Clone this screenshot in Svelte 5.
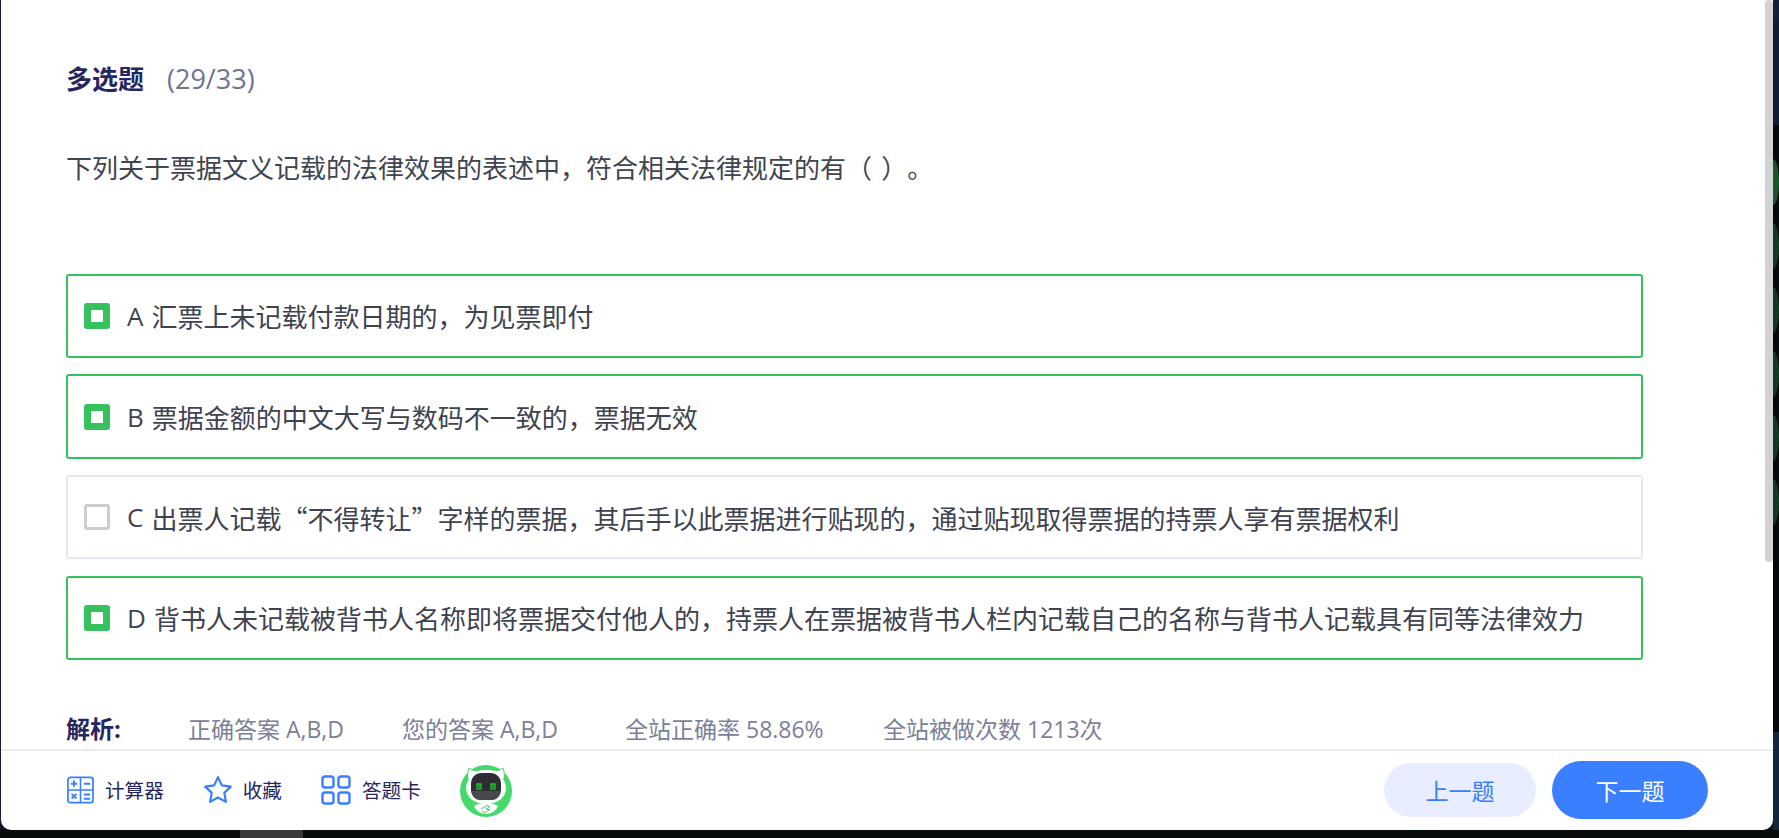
<script>
  const options = [
    { key: 'A', text: '汇票上未记载付款日期的，为见票即付', on: true },
    { key: 'B', text: '票据金额的中文大写与数码不一致的，票据无效', on: true },
    { key: 'C', text: '出票人记载“不得转让”字样的票据，其后手以此票据进行贴现的，通过贴现取得票据的持票人享有票据权利', on: false },
    { key: 'D', text: '背书人未记载被背书人名称即将票据交付他人的，持票人在票据被背书人栏内记载自己的名称与背书人记载具有同等法律效力', on: true }
  ];
</script>

<div class="page" lang="zh-CN">
  <div class="card">
    <div class="content">
      <div class="heading"><b>多选题</b><span>(29/33)</span></div>
      <p class="question">下列关于票据文义记载的法律效果的表述中，符合相关法律规定的有（ ）。</p>
      <ul class="options">
        {#each options as o}
          <li class="option" class:on={o.on}>
            <i class="check"></i>
            <span class="key">{o.key}</span>
            <span class="cjk">{o.text}</span>
          </li>
        {/each}
      </ul>
      <div class="analysis">
        <b>解析:</b>
        <span class="a1">正确答案 A,B,D</span>
        <span class="a2">您的答案 A,B,D</span>
        <span class="a3">全站正确率 58.86%</span>
        <span>全站被做次数 1213次</span>
      </div>
    </div>
    <div class="scrollbar"></div>
    <footer>
      <div class="tool t1">
        <svg width="27" height="28" viewBox="0 0 28 28" fill="none" stroke="#3a7fff">
          <rect x="1" y="1" width="26" height="26" rx="2.5" stroke-width="1.8"/>
          <path d="M14 1v26M1 14h26" stroke-width="1.6"/>
          <path d="M4 7.5h6.5M7.2 4.2v6.5M17.5 7.5h6.5M4.8 18l5 5M9.8 18l-5 5M17.5 18.7h6.5M17.5 23h6.5" stroke-width="2"/>
        </svg>
        <span>计算器</span>
      </div>
      <div class="tool t2">
        <svg width="30" height="30" viewBox="0 0 30 30" fill="none" stroke="#3a7fff" stroke-width="2.2" stroke-linejoin="round">
          <path d="M15 2.2l3.9 8.2 8.9 1.2-6.5 6.3 1.6 9-7.9-4.4-7.9 4.4 1.6-9-6.5-6.3 8.9-1.2z"/>
        </svg>
        <span>收藏</span>
      </div>
      <div class="tool t3">
        <svg width="30" height="30" viewBox="0 0 30 30" fill="none" stroke="#3a7fff" stroke-width="2.4">
          <rect x="1.5" y="1.5" width="11" height="11" rx="2.5"/>
          <rect x="17.5" y="1.5" width="11" height="11" rx="2.5"/>
          <rect x="1.5" y="17.5" width="11" height="11" rx="2.5"/>
          <rect x="17.5" y="17.5" width="11" height="11" rx="2.5"/>
        </svg>
        <span>答题卡</span>
      </div>
      <svg class="robot" width="52" height="54" viewBox="0 0 52 54">
        <circle cx="26" cy="28" r="26" fill="#45d96c"/>
        <path d="M9 5c3 2 5 3 8 2.500 6-1.500 12-1.500 18 0 3 .5 5-.5 8-2.500 2 6 2 11-1 14H10C7 16 7 11 9 5z" fill="#fff" stroke="#45d96c" stroke-width="1"/>
        <path d="M6 25c0-10 9-15 20-15s20 5 20 15-9 16-20 16S6 35 6 25z" fill="#f4fff7"/>
        <rect x="11" y="10" width="30" height="27" rx="10" fill="#2e2e32"/>
        <path d="M11.500 28h29c-1 6-4 9-9 9H20.500c-5 0-8-3-9-9z" fill="#48484d"/>
        <path d="M17 27v-6h4v6M19 22v5M31 27v-6h4v6M33 22v5" fill="none" stroke="#18d028" stroke-width="1.300"/>
        <path d="M14 43c3-2 7-3 12-3s9 1 12 3c-2 5-7 8-12 8s-10-3-12-8z" fill="#fff"/>
        <path d="M21 46l6-3.500 3 1-4 2.500 4 .5-5 3-3-1" fill="none" stroke="#52c878" stroke-width="1"/>
      </svg>
      <div class="actions">
        <button class="prev">上一题</button>
        <button class="next">下一题</button>
      </div>
    </footer>
  </div>
  <aside class="strip">
    <div class="navy"></div>
    <div class="dark">
      <i></i><i></i><i></i><i></i><i></i><i></i>
    </div>
    <div class="navy2"></div>
  </aside>
  <div class="bottom"></div>
</div>

<style>
  :global(body) {
    margin: 0;
    background: #0a0f0d;
    overflow: hidden;
  }
  .page {
    position: relative;
    width: 1779px;
    height: 838px;
    display: grid;
    grid-template-columns: 1772px 6px;
    padding-left: 1px;
    box-sizing: border-box;
    background: #080d0c;
    font-family: "Open Sans", "Noto Sans CJK SC", sans-serif;
    text-spacing-trim: space-all;
    overflow: hidden;
  }
  .page::before {
    content: "";
    position: absolute;
    left: 0;
    top: 0;
    width: 1px;
    height: 830px;
    background: #14203a;
  }
  .card {
    position: relative;
    height: 830px;
    background: #fff;
    border-radius: 0 0 10px 10px;
    display: flex;
    flex-direction: column;
    overflow: hidden;
  }
  .content {
    flex: 1;
    min-height: 0;
    overflow: hidden;
    padding: 60px 0 0 65px;
  }
  .heading {
    display: flex;
    align-items: center;
    height: 38px;
    font-size: 26px;
    line-height: 38px;
    color: #26265f;
  }
  .heading b {
    font-weight: 700;
  }
  .heading span {
    margin-left: 23px;
    font-size: 27px;
    color: #6f7394;
  }
  .question {
    margin: 50px 0 0;
    font-size: 26px;
    line-height: 40px;
    word-spacing: 2.500px;
    color: #41454f;
  }
  .options {
    list-style: none;
    margin: 85.800px 0 0;
    padding: 0;
    width: 1577px;
    display: flex;
    flex-direction: column;
    gap: 16.300px;
  }
  .option {
    box-sizing: border-box;
    height: 84.300px;
    border: 2px solid #e4e8f5;
    border-radius: 3px;
    padding-left: 16px;
    display: flex;
    align-items: center;
    font-size: 26px;
    color: #3f4350;
  }
  .option.on {
    border-color: #35c25c;
  }
  .key {
    margin-left: 17px;
    margin-right: 8px;
  }
  .cjk {
    font-family: "Noto Sans CJK SC", sans-serif;
  }
  .check {
    box-sizing: border-box;
    flex: none;
    width: 26px;
    height: 26px;
    border: 3px solid #cdcdcd;
    border-radius: 3px;
    background: #fff;
  }
  .on .check {
    border: 7px solid #35c25c;
  }
  .analysis {
    margin-top: 54px;
    display: flex;
    align-items: center;
    font-size: 23px;
    line-height: 30px;
    color: #7b7f98;
    white-space: nowrap;
  }
  .analysis b {
    width: 122px;
    font-size: 24px;
    color: #26265f;
  }
  .a1 { width: 214px; }
  .a2 { width: 223px; }
  .a3 { width: 258px; }
  .scrollbar {
    position: absolute;
    right: 0;
    top: 0;
    width: 8px;
    height: 562px;
    border-radius: 4px;
    background: #d2d2d2;
  }
  footer {
    flex: none;
    box-sizing: border-box;
    height: 81px;
    border-top: 2px solid #ececee;
    display: flex;
    align-items: center;
    padding: 0 65px 2px 66px;
    color: #26265f;
    font-size: 19.600px;
  }
  .tool {
    display: flex;
    align-items: center;
    gap: 11px;
  }
  .tool svg {
    display: block;
  }
  .t2 { margin-left: 39px; gap: 10px; }
  .t3 { margin-left: 39px; }
  .robot {
    margin-left: 39px;
    display: block;
  }
  .actions {
    margin-left: auto;
    display: flex;
    align-items: center;
    gap: 16px;
  }
  button {
    border: 0;
    padding: 0;
    font: inherit;
    font-size: 23px;
    border-radius: 29px;
  }
  .prev {
    width: 152px;
    height: 54px;
    background: #e8eeff;
    color: #3a7fff;
  }
  .next {
    width: 156px;
    height: 58px;
    background: #3a7fff;
    color: #fff;
  }
  .strip {
    display: flex;
    flex-direction: column;
    height: 830px;
    overflow: hidden;
  }
  .navy {
    height: 125px;
    background: linear-gradient(#13203c 20px, #101c33 21px);
    flex: none;
  }
  .dark {
    flex: 1;
    display: flex;
    flex-direction: column;
    gap: 18px;
    padding-top: 34px;
    background: #05090b;
  }
  .dark i {
    flex: none;
    display: block;
    width: 12px;
    height: 46px;
    border-radius: 50%;
    margin-left: -6px;
    background: #123a22;
  }
  .dark i:first-child {
    background: #17552b;
  }
  .navy2 {
    height: 98px;
    flex: none;
    background: #14263a;
  }
  .bottom {
    position: absolute;
    left: 240px;
    bottom: 0;
    width: 63px;
    height: 8px;
    background: #3a3a3a;
  }
</style>
